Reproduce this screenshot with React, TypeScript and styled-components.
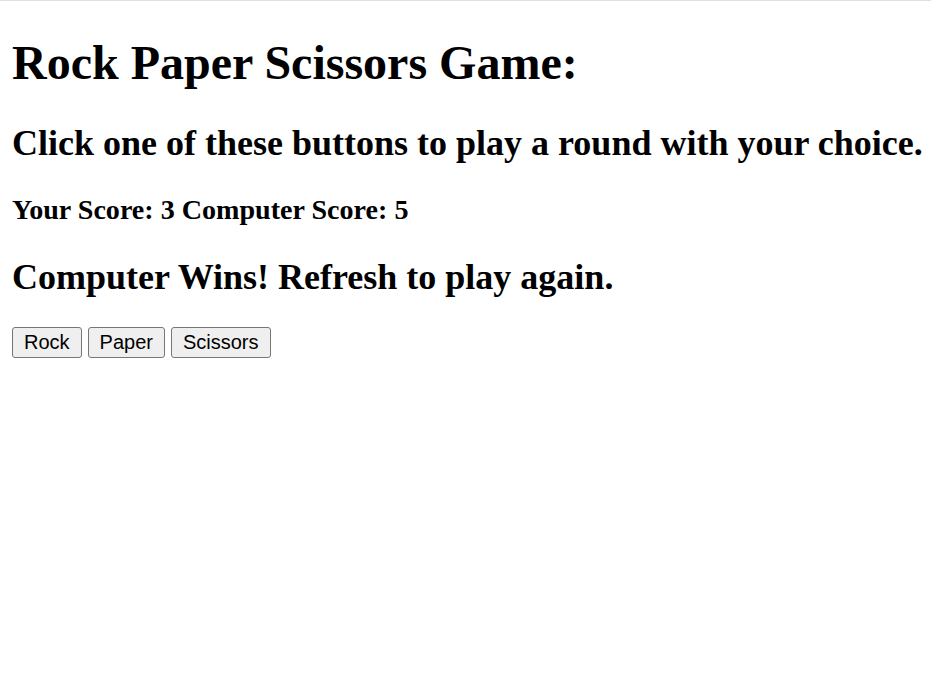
import React from "react";
import styled, { createGlobalStyle } from "styled-components";

const Global = createGlobalStyle`
  html { background: #ffffff; border-top: 1px solid #e0e0e0; }
  body {
    margin: 0;
    font-family: "Liberation Serif", "Times New Roman", serif;
    font-size: 24px;
    color: #000000;
  }
`;

const Page = styled.main`
  display: flow-root;
  padding: 1.5px 12px 0;
`;

const Title = styled.h1`
  font-size: 48px;
  font-weight: bold;
  margin: 32.16px 0;
`;

const Subtitle = styled.h2`
  font-size: 36px;
  font-weight: bold;
  margin: 29.88px 0;
  white-space: nowrap;
`;

const Score = styled.h3`
  font-size: 28.08px;
  font-weight: bold;
  margin: 28.08px 0;
`;

const ButtonRow = styled.div`
  display: flex;
  gap: 6px;
  margin-top: 29.2px;
`;

const ChoiceButton = styled.button`
  font-family: "Liberation Sans", Arial, sans-serif;
  font-size: 20px;
  line-height: 23px;
  padding: 3px 11px;
  border: 1px solid #767676;
  border-radius: 3px;
  background: #efefef;
  color: #000000;
`;

export default function App() {
  return (
    <Page>
      <Global />
      <Title>Rock Paper Scissors Game:</Title>
      <Subtitle>Click one of these buttons to play a round with your choice.</Subtitle>
      <Score>Your Score: 3 Computer Score: 5</Score>
      <Subtitle>Computer Wins! Refresh to play again.</Subtitle>
      <ButtonRow>
        <ChoiceButton>Rock</ChoiceButton>
        <ChoiceButton>Paper</ChoiceButton>
        <ChoiceButton>Scissors</ChoiceButton>
      </ButtonRow>
    </Page>
  );
}
